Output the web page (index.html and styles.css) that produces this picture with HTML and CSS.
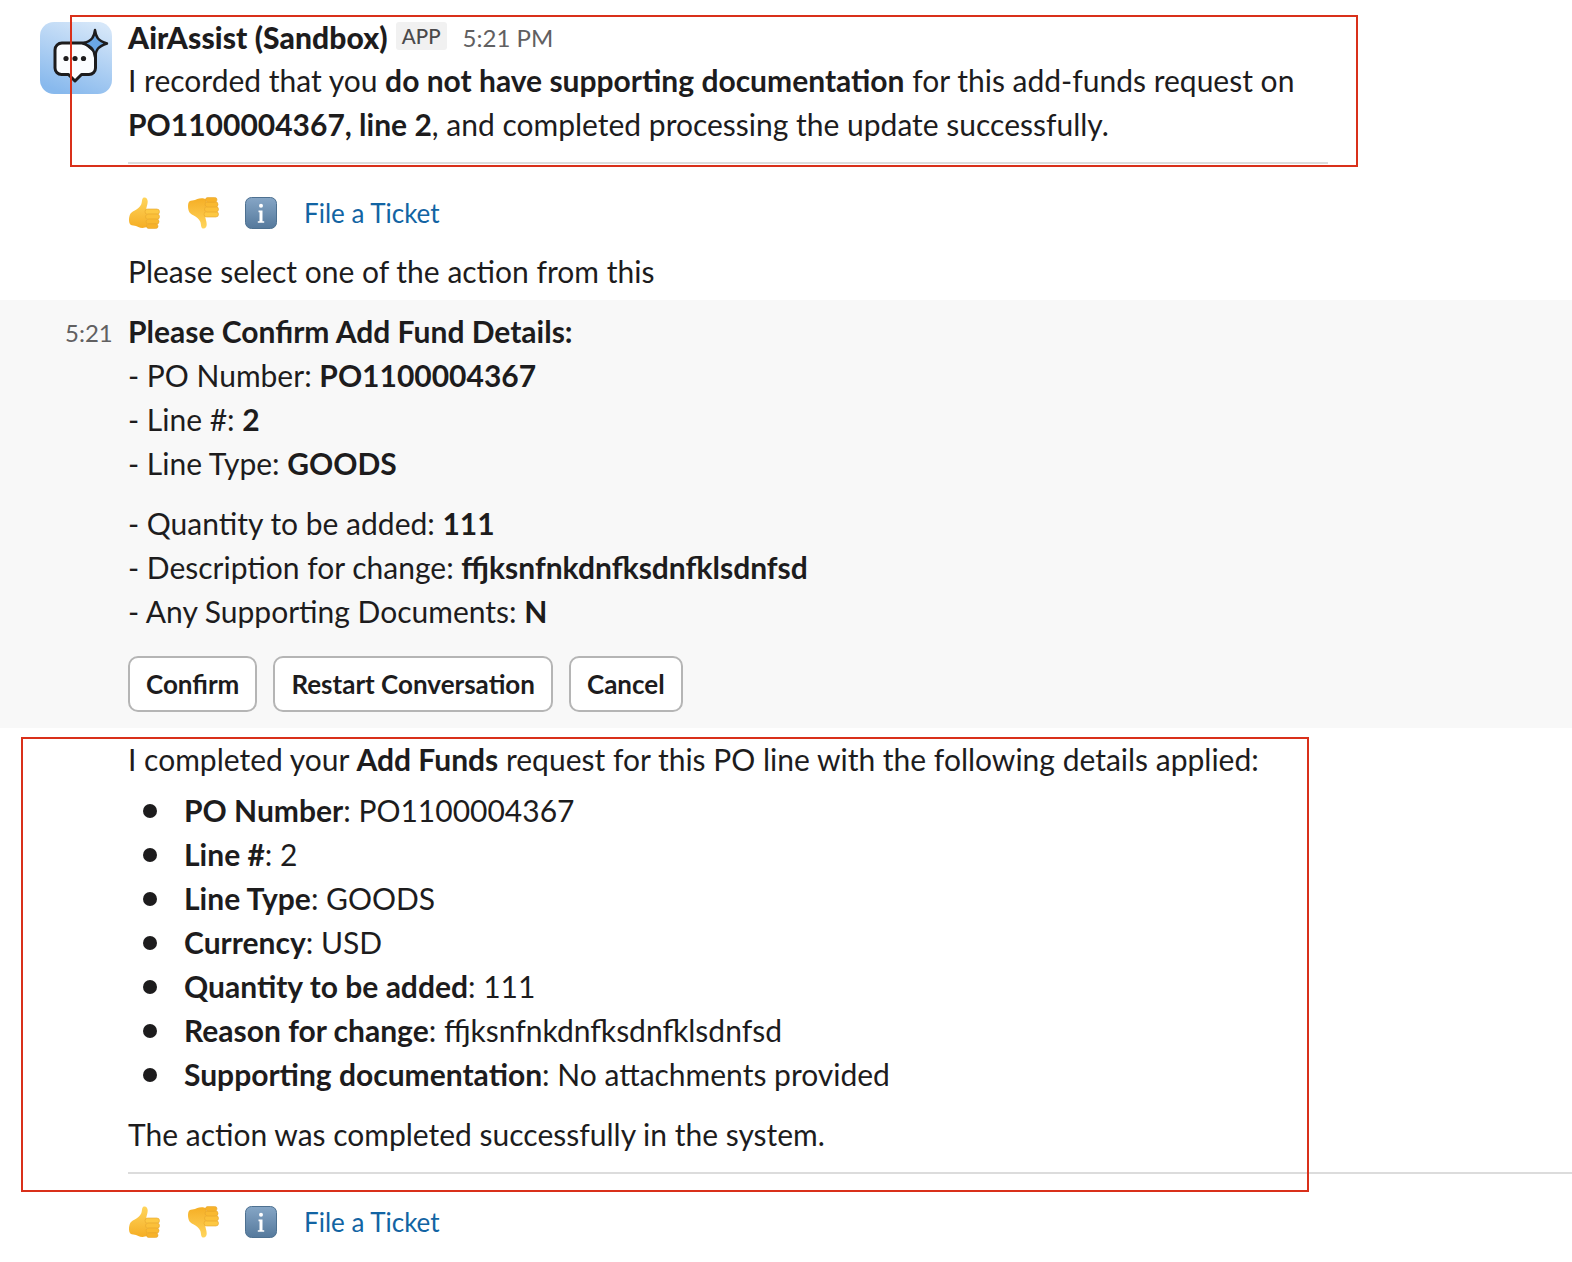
FILE: index.html
```html
<!DOCTYPE html>
<html lang="en">
<head>
<meta charset="utf-8">
<title>AirAssist</title>
<link rel="stylesheet" href="styles.css">
</head>
<body>
<svg class="defs" width="0" height="0" aria-hidden="true">
  <defs>
    <linearGradient id="thumbfill" x1="0" y1="0" x2="0" y2="1"><stop offset="0" stop-color="#ffd55c"/><stop offset="1" stop-color="#f5ae25"/></linearGradient>
    <linearGradient id="infofill" x1="0" y1="0" x2="0" y2="1"><stop offset="0" stop-color="#86a6c6"/><stop offset="1" stop-color="#55799c"/></linearGradient>
    <symbol id="thumb" viewBox="0 0 32 32">
      <path d="M16 .5c2.400-.3 3.800 1.700 3.700 4.300-.1 3-1.500 5.300-1.400 8.200l1 16.500c-3 2-6.500 1.500-9 .5-1.500-.6-3-1.400-5-1.500-2.300-.2-3.500-1-4-3-.5-2.300-.4-5 .5-7.500.8-2.200 2.500-3.200 4.500-4.200 3-1.500 5.700-3.500 7-6.500 1-2.300.2-6.300 2.700-6.800z" fill="url(#thumbfill)"/>
      <rect x="17" y="12" width="14.500" height="5.400" rx="2.700" fill="#fdc843" stroke="#e5a52b" stroke-width=".6"/>
      <rect x="17.500" y="17" width="14" height="5.400" rx="2.700" fill="#fbc03a" stroke="#e5a52b" stroke-width=".6"/>
      <rect x="18" y="22" width="13" height="5.200" rx="2.600" fill="#f9b931" stroke="#e5a52b" stroke-width=".6"/>
      <rect x="18.500" y="26.800" width="11.500" height="4.800" rx="2.400" fill="#f7b22a" stroke="#e5a52b" stroke-width=".6"/>
    </symbol>
    <symbol id="info" viewBox="0 0 32 32">
      <rect x=".5" y=".5" width="31" height="31" rx="6" fill="url(#infofill)" stroke="#4d7090"/>
      <circle cx="16" cy="8.800" r="2" fill="#fff"/>
      <path d="M13.500 13.500h4v10.700h1.700v1.600h-6.400v-1.600h1.700v-9h-1z" fill="#fff"/>
    </symbol>
  </defs>
</svg>

<main class="page">
  <section class="msg">
    <div class="avatar">
      <svg viewBox="0 0 72 72" width="72" height="72">
        <defs><linearGradient id="av" x1=".75" y1="0" x2=".35" y2="1"><stop offset="0" stop-color="#d6e7f9"/><stop offset="1" stop-color="#88b9ed"/></linearGradient></defs>
        <rect width="72" height="72" rx="14" fill="url(#av)"/>
        <path d="M45 21H22a7 7 0 0 0-7 7v18a6.500 6.500 0 0 0 6.500 6.500h7l6.500 6.500 6.500-6.500h7.500a6.500 6.500 0 0 0 6.500-6.500V30z" fill="#fbfdff" stroke="#1d1c1d" stroke-width="3" stroke-linejoin="round"/>
        <circle cx="26" cy="36.500" r="2.600" fill="#1d1c1d"/><circle cx="35" cy="36.500" r="2.600" fill="#1d1c1d"/><circle cx="43.500" cy="36.500" r="2.600" fill="#1d1c1d"/>
        <path d="M55 8c1 7.500 3 10.500 12 13.500-9 3-11 6-12 13.500-1-7.500-3-10.500-12-13.500 9-3 11-6 12-13.500z" fill="#6aa7e6" stroke="#1d1c1d" stroke-width="2.400" stroke-linejoin="round"/>
      </svg>
    </div>
    <div class="body">
      <div class="head"><b class="name">AirAssist (Sandbox)</b><span class="app">APP</span><span class="time">5:21 PM</span></div>
      <p class="line">I recorded that you <b>do not have supporting documentation</b> for this add-funds request on</p>
      <p class="line"><b>PO1100004367, line 2</b>, and completed processing the update successfully.</p>
      <hr class="rule rule-short">
      <div class="actions">
        <svg class="emoji"><use href="#thumb"/></svg>
        <svg class="emoji flip"><use href="#thumb"/></svg>
        <svg class="emoji"><use href="#info"/></svg>
        <a class="ticket">File a Ticket</a>
      </div>
      <p class="line prompt">Please select one of the action from this</p>
    </div>
  </section>

  <section class="msg hovered">
    <span class="stamp">5:21</span>
    <div class="body">
      <p class="line"><b>Please Confirm Add Fund Details:</b></p>
      <p class="line">- PO Number: <b>PO1100004367</b></p>
      <p class="line">- Line #: <b>2</b></p>
      <p class="line">- Line Type: <b>GOODS</b></p>
      <p class="line gap">- Quantity to be added: <b>111</b></p>
      <p class="line">- Description for change: <b>ffjksnfnkdnfksdnfklsdnfsd</b></p>
      <p class="line">- Any Supporting Documents: <b>N</b></p>
      <div class="buttons">
        <button class="btn">Confirm</button>
        <button class="btn">Restart Conversation</button>
        <button class="btn">Cancel</button>
      </div>
    </div>
  </section>

  <section class="msg last">
    <div class="body">
      <p class="line">I completed your <b>Add Funds</b> request for this PO line with the following details applied:</p>
      <ul class="list">
        <li><b>PO Number</b>: PO1100004367</li>
        <li><b>Line #</b>: 2</li>
        <li><b>Line Type</b>: GOODS</li>
        <li><b>Currency</b>: USD</li>
        <li><b>Quantity to be added</b>: 111</li>
        <li><b>Reason for change</b>: ffjksnfnkdnfksdnfklsdnfsd</li>
        <li><b>Supporting documentation</b>: No attachments provided</li>
      </ul>
      <p class="line">The action was completed successfully in the system.</p>
      <hr class="rule">
      <div class="actions">
        <svg class="emoji"><use href="#thumb"/></svg>
        <svg class="emoji flip"><use href="#thumb"/></svg>
        <svg class="emoji"><use href="#info"/></svg>
        <a class="ticket">File a Ticket</a>
      </div>
    </div>
  </section>

  <div class="mark mark-top"></div>
  <div class="mark mark-bottom"></div>
</main>
</body>
</html>
```
FILE: styles.css
```css
* { box-sizing: border-box; }
html, body { margin: 0; padding: 0; background: #fff; }
body {
  font-family: Lato, "Open Sans", sans-serif;
  color: #1d1c1d;
  font-size: 30px;
  line-height: 44px;
  overflow: hidden;
  height: 1262px;
  font-variant-ligatures: common-ligatures;
}
.defs { position: absolute; }
.page { position: relative; width: 1572px; height: 1262px; }
b { font-weight: 700; }
.msg { position: relative; display: flex; padding-left: 40px; }
.avatar { width: 72px; height: 72px; margin: 22px 16px 0 0; flex: none; }
.avatar svg { display: block; }
.body { flex: 1; min-width: 0; }
.head { display: flex; align-items: center; height: 43px; margin-top: 15px; }
.name { font-size: 30px; font-weight: 900; letter-spacing: 0.1px; }
.app {
  font-size: 20.5px; font-weight: 500; line-height: 28px; height: 28px; padding: 0 6px; margin: -1px 0 0 8px;
  background: #f1f1f1; border-radius: 3px; color: #4a494a;
}
.time { font-size: 24px; color: #616061; margin: 3px 0 0 16px; }
.line { margin: 0; }
.rule { border: 0; height: 2px; background: #dcdcdc; margin: 16px 0 0; }
.rule-short { width: 1200px; }
.actions { display: flex; align-items: center; height: 32px; margin-top: 33px; }
.emoji { width: 32px; height: 32px; margin-right: 27px; flex: none; }
.flip { transform: scaleY(-1); margin-right: 26px; }
.emoji:nth-of-type(3) { margin-right: 27px; }
.ticket { color: #1264a3; font-size: 26px; }
.prompt { margin-top: 20px; height: 44px; }
.hovered { background: #f8f8f8; margin-top: 7px; padding: 9px 0 16px 128px; height: 428px; }
.stamp { position: absolute; left: 65px; top: 19px; font-size: 24px; line-height: 28px; color: #616061; }
.gap { margin-top: 16px; }
.buttons { display: flex; gap: 16px; margin-top: 23px; }
.btn {
  font: 700 26px/1 Lato, sans-serif; color: #1d1c1d; height: 56px; padding: 0 16px;
  background: #fff; border: 2px solid #b5b5b5; border-radius: 10px;
}
.last { padding-left: 128px; padding-top: 9px; }
.list { margin: 7px 0 16px; padding: 0 0 0 56px; list-style: none; }
.list li { position: relative; }
.list li::before {
  content: ""; position: absolute; left: -41px; top: 16px; width: 14px; height: 14px; border-radius: 50%; background: #1d1c1d;
}
.last .rule { margin-top: 16px; }
.last .actions { margin-top: 32px; }
.mark { position: absolute; border: 2px solid #d9301a; pointer-events: none; }
.mark-top { left: 70px; top: 15px; width: 1288px; height: 152px; }
.mark-bottom { left: 21px; top: 737px; width: 1288px; height: 455px; }
```
